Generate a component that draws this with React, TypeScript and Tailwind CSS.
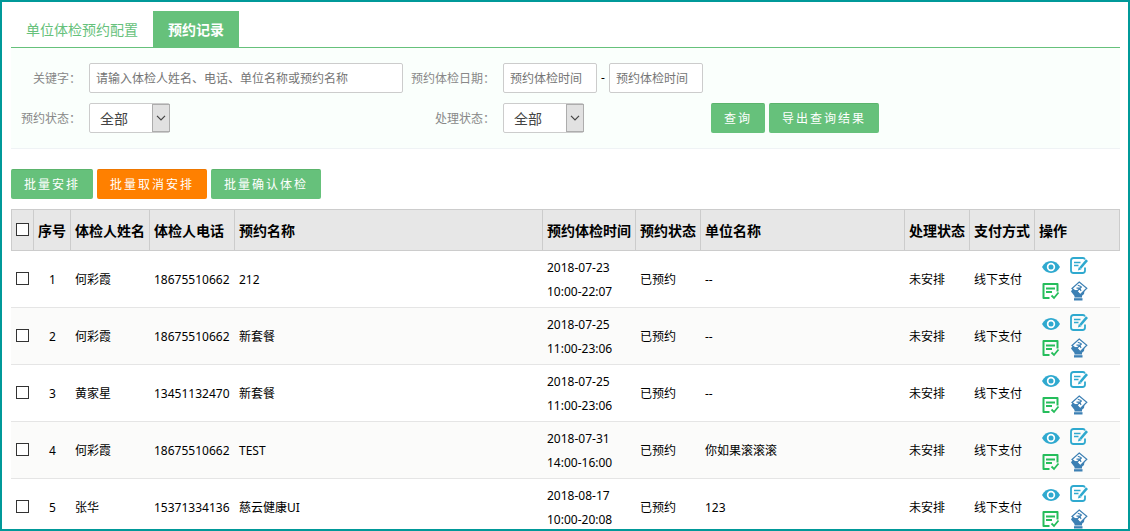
import { useState, type ReactNode } from "react";

type Booking = {
  id: number;
  person: string;
  phone: string;
  plan: string;
  date: string;
  time: string;
  company: string;
};

const bookings: Booking[] = [
  { id: 1, person: "何彩霞", phone: "18675510662", plan: "212", date: "2018-07-23", time: "10:00-22:07", company: "--" },
  { id: 2, person: "何彩霞", phone: "18675510662", plan: "新套餐", date: "2018-07-25", time: "11:00-23:06", company: "--" },
  { id: 3, person: "黄家星", phone: "13451132470", plan: "新套餐", date: "2018-07-25", time: "11:00-23:06", company: "--" },
  { id: 4, person: "何彩霞", phone: "18675510662", plan: "TEST", date: "2018-07-31", time: "14:00-16:00", company: "你如果滚滚滚" },
  { id: 5, person: "张华", phone: "15371334136", plan: "慈云健康UI", date: "2018-08-17", time: "10:00-20:08", company: "123" },
];

function EyeIcon() {
  return (
    <svg width="18" height="18" viewBox="0 0 18 18" aria-hidden="true">
      <path d="M0 9C2 5.200 5.200 3 9 3s7 2.200 9 6c-2 3.800-5.200 6-9 6s-7-2.200-9-6z" fill="#2fa9cf" />
      <circle cx="9" cy="9" r="4.200" fill="#fff" />
      <circle cx="9" cy="9" r="2.500" fill="#2fa9cf" />
    </svg>
  );
}

function EditIcon() {
  return (
    <svg width="18" height="20" viewBox="0 0 18 20" fill="none" stroke="#2fa9cf" aria-hidden="true">
      <path d="M15 2.500C14.500 1.300 14 1 13 1H3.500Q1 1 1 3.500V13.500Q1 16 3.500 16H12.500Q15 16 15 13.500V10.500" strokeWidth="1.800" />
      <path d="M4 5.500h6.500M4 8.500h4.500" strokeWidth="1.300" />
      <path d="M17 3.200L10.300 11" strokeWidth="2.600" />
      <path d="M8.900 10l2.600 2.200-3.600 1.200z" fill="#2fa9cf" stroke="none" />
    </svg>
  );
}

function ConfirmIcon() {
  return (
    <svg width="18" height="18" viewBox="0 0 18 18" fill="none" stroke="#25bd5b" aria-hidden="true">
      <path d="M7.500 16H1.500V2H15.500V9.500" strokeWidth="2" strokeLinejoin="round" />
      <path d="M4 6.500h9M4 10h6" strokeWidth="1.800" />
      <path d="M9.500 13.500l2.500 2.500 4.500-5.500" strokeWidth="1.800" />
    </svg>
  );
}

function PayIcon() {
  return (
    <svg width="18" height="20" viewBox="0 0 18 20" fill="none" stroke="#3d80b4" aria-hidden="true">
      <path d="M2.500 8L1 10.500 4.500 15V16.500H12V14.800L14 13 14.500 9.500 9 12z" fill="#3d80b4" stroke="none" />
      <path d="M9.200 1L16.800 7.300 10.200 13.800 2 7.500z" fill="#fff" strokeWidth="1.200" />
      <path d="M7.800 4.300l3.800 1.400M11.600 5.700L7.200 10M6.500 7.200l3.300-.4 1.200 3.200" strokeWidth="1.200" />
      <path d="M2 10.500l4.500-.5 3 3.500" strokeWidth="1.800" />
      <path d="M4 17.200h8.500v2.300H4z" fill="#3d80b4" stroke="none" />
    </svg>
  );
}

function ActionButton({ label, children }: { label: string; children: ReactNode }) {
  return (
    <button type="button" aria-label={label} className="flex h-6 w-5 cursor-pointer items-center justify-center">
      {children}
    </button>
  );
}

function Button({ children, tone = "green" }: { children: ReactNode; tone?: "green" | "orange" }) {
  const colors =
    tone === "green"
      ? "border-t-[#5bb46c] bg-[#66c17b] hover:bg-[#58b36d]"
      : "border-t-[#ee7700] bg-[#ff8000] hover:bg-[#ee7700]";
  return (
    <button
      type="button"
      className={`h-[30px] cursor-pointer rounded-xs border-t px-[13px] text-xs tracking-[2px] whitespace-nowrap text-white ${colors}`}
    >
      {children}
    </button>
  );
}

function StatusSelect({ id, options }: { id: string; options: string[] }) {
  return (
    <div className="relative w-[81px]">
      <select
        id={id}
        className="h-[30px] w-full appearance-none rounded-xs border border-[#ccc] bg-white pt-0.5 pr-5 pl-2.5 text-sm text-[#444]"
      >
        {options.map((option) => (
          <option key={option}>{option}</option>
        ))}
      </select>
      <span className="pointer-events-none absolute inset-y-px right-0 flex w-[18px] items-center justify-center border border-[#adadad] bg-[#e1e1e1]">
        <svg width="10" height="6" viewBox="0 0 10 6" fill="none" stroke="#444" strokeWidth="1.200" aria-hidden="true">
          <path d="M1 0.800l4 4 4-4" />
        </svg>
      </span>
    </div>
  );
}

const fieldClass =
  "h-[30px] rounded-xs border border-[#ccc] bg-white px-1.5 text-xs text-[#444] placeholder:text-[#757575]";
const labelClass = "pt-0.5 text-right text-xs whitespace-nowrap text-[#888]";
const checkClass =
  "block size-[13px] appearance-none border border-[#333] bg-white checked:bg-[#66c17b]";
const headClass = "border border-l-0 border-[#ccc] px-1 pt-0.5 whitespace-nowrap";
const cellClass = "border-b border-[#e5e5e5] px-1 pt-[5px] pb-[3px]";

export default function App() {
  const [selected, setSelected] = useState<number[]>([]);
  const allSelected = selected.length === bookings.length;

  const toggle = (id: number) =>
    setSelected((ids) => (ids.includes(id) ? ids.filter((i) => i !== id) : [...ids, id]));

  return (
    <main className="h-screen overflow-y-auto border-2 border-[#009999] bg-white pt-[9px] pr-2 pl-[9px] font-['Noto_Sans','Noto_Sans_CJK_SC',sans-serif] text-xs text-black [scrollbar-width:none]">
      <nav className="flex border-b border-[#66c17b] text-sm">
        <a href="#config" className="flex h-9 items-center px-[15px] pt-0.5 text-[#66c17b]">
          单位体检预约配置
        </a>
        <a href="#records" aria-current="page" className="flex h-9 items-center bg-[#66c17b] px-[15px] pt-0.5 font-bold text-white">
          预约记录
        </a>
      </nav>

      <form className="grid grid-cols-[70px_314px_84px_200px_auto] items-center gap-x-2 gap-y-2.5 border-b border-[#eff3f5] bg-[#fafffc] py-[15px]">
        <label htmlFor="keyword" className={labelClass}>关键字：</label>
        <input id="keyword" type="text" placeholder="请输入体检人姓名、电话、单位名称或预约名称" className={`${fieldClass} w-full`} />
        <label htmlFor="date-from" className={labelClass}>预约体检日期：</label>
        <div className="flex items-center justify-between">
          <input id="date-from" type="text" placeholder="预约体检时间" className={`${fieldClass} w-[94px]`} />
          <span>-</span>
          <input type="text" aria-label="预约体检日期" placeholder="预约体检时间" className={`${fieldClass} w-[94px]`} />
        </div>
        <label htmlFor="booking-status" className={`${labelClass} col-start-1`}>预约状态：</label>
        <StatusSelect id="booking-status" options={["全部", "已预约"]} />
        <label htmlFor="process-status" className={labelClass}>处理状态：</label>
        <StatusSelect id="process-status" options={["全部", "未安排"]} />
        <div className="flex gap-1">
          <Button>查询</Button>
          <Button>导出查询结果</Button>
        </div>
      </form>

      <div className="flex gap-1 pt-5 pb-2.5">
        <Button>批量安排</Button>
        <Button tone="orange">批量取消安排</Button>
        <Button>批量确认体检</Button>
      </div>

      <table className="w-full table-fixed border-separate border-spacing-0 text-left">
        <colgroup>
          <col className="w-[23px]" />
          <col className="w-[37px]" />
          <col className="w-[79px]" />
          <col className="w-[85px]" />
          <col />
          <col className="w-[93px]" />
          <col className="w-[65px]" />
          <col className="w-[204px]" />
          <col className="w-[65px]" />
          <col className="w-[65px]" />
          <col className="w-[85px]" />
        </colgroup>
        <thead className="bg-[#e7e7e7] text-sm">
          <tr className="h-[42px]">
            <th className="border border-[#ccc] px-1 pb-0.5">
              <input
                type="checkbox"
                aria-label="全选"
                checked={allSelected}
                onChange={() => setSelected(allSelected ? [] : bookings.map((b) => b.id))}
                className={checkClass}
              />
            </th>
            <th className={headClass}>序号</th>
            <th className={headClass}>体检人姓名</th>
            <th className={headClass}>体检人电话</th>
            <th className={headClass}>预约名称</th>
            <th className={headClass}>预约体检时间</th>
            <th className={headClass}>预约状态</th>
            <th className={headClass}>单位名称</th>
            <th className={headClass}>处理状态</th>
            <th className={headClass}>支付方式</th>
            <th className={headClass}>操作</th>
          </tr>
        </thead>
        <tbody>
          {bookings.map((b) => (
            <tr key={b.id} className="leading-6 even:bg-[#fbfbfa]">
              <td className={cellClass}>
                <input
                  type="checkbox"
                  aria-label={`选择 ${b.id}`}
                  checked={selected.includes(b.id)}
                  onChange={() => toggle(b.id)}
                  className={`${checkClass} mb-1 ml-px`}
                />
              </td>
              <td className={`${cellClass} text-center`}>{b.id}</td>
              <td className={cellClass}>{b.person}</td>
              <td className={cellClass}>{b.phone}</td>
              <td className={cellClass}>{b.plan}</td>
              <td className={cellClass}>
                {b.date}
                <br />
                {b.time}
              </td>
              <td className={cellClass}>已预约</td>
              <td className={cellClass}>{b.company}</td>
              <td className={cellClass}>未安排</td>
              <td className={cellClass}>线下支付</td>
              <td className="border-b border-[#e5e5e5] px-1 py-1">
                <div className="grid w-max grid-cols-2 gap-x-2 pl-0.5">
                  <ActionButton label="查看"><EyeIcon /></ActionButton>
                  <ActionButton label="编辑"><EditIcon /></ActionButton>
                  <ActionButton label="确认体检"><ConfirmIcon /></ActionButton>
                  <ActionButton label="支付"><PayIcon /></ActionButton>
                </div>
              </td>
            </tr>
          ))}
        </tbody>
      </table>
    </main>
  );
}
